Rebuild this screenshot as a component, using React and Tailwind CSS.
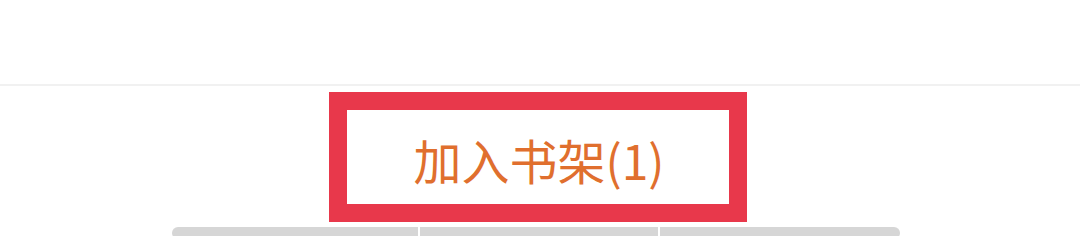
import React from "react";

export default function App() {
  return (
    <div className="w-[1080px] h-[236px] bg-white overflow-hidden" style={{ fontFamily: '"Noto Sans CJK SC", "Noto Sans", sans-serif' }}>
      {/* top area */}
      <div className="h-[84px]" />
      <div className="h-[2px] bg-[#f1f1f1]" />

      {/* button */}
      <div className="pt-[6px] pl-[329px]">
        <div className="w-[418px] h-[130px] border-[18px] border-[#e8384b] flex items-center justify-center">
          <span className="text-[48px] leading-none text-[#e06f2e] pl-[2px] pt-[4px]">加入书架(1)</span>
        </div>
      </div>

      {/* bottom scroll bar */}
      <div className="pt-[5px] pl-[172px] flex gap-[2px]">
        <div className="w-[246px] h-[12px] bg-[#d6d6d6] rounded-l-full" />
        <div className="w-[238px] h-[12px] bg-[#d6d6d6]" />
        <div className="w-[240px] h-[12px] bg-[#d6d6d6] rounded-r-full" />
      </div>
    </div>
  );
}
